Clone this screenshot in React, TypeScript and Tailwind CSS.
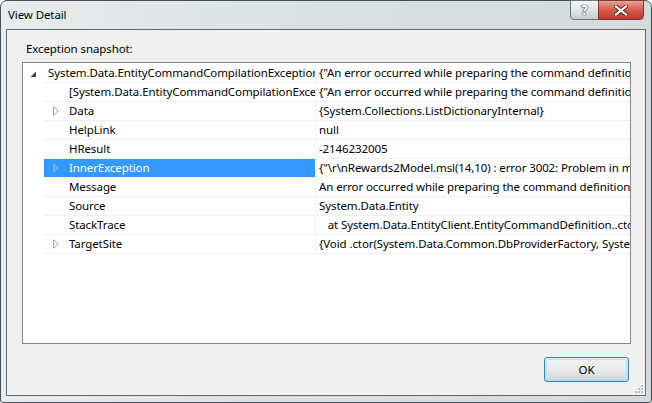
import React from "react";

const FONT = { fontFamily: '"Noto Sans", "Open Sans", Arial, sans-serif' };

type Row = {
  name: string;
  value: string;
  level: 0 | 1;
  expander: "expanded" | "collapsed" | "none";
  selected?: boolean;
};

const rows: Row[] = [
  {
    name: "System.Data.EntityCommandCompilationException",
    value:
      '{"An error occurred while preparing the command definition. See the inner exception for details."}',
    level: 0,
    expander: "expanded",
  },
  {
    name: "[System.Data.EntityCommandCompilationException]",
    value:
      '{"An error occurred while preparing the command definition. See the inner exception for details."}',
    level: 1,
    expander: "none",
  },
  { name: "Data", value: "{System.Collections.ListDictionaryInternal}", level: 1, expander: "collapsed" },
  { name: "HelpLink", value: "null", level: 1, expander: "none" },
  { name: "HResult", value: "-2146232005", level: 1, expander: "none" },
  {
    name: "InnerException",
    value: '{"\\r\\nRewards2Model.msl(14,10) : error 3002: Problem in mapping fragment starting at line 14"}',
    level: 1,
    expander: "collapsed",
    selected: true,
  },
  {
    name: "Message",
    value: "An error occurred while preparing the command definition. See the inner exception for details.",
    level: 1,
    expander: "none",
  },
  { name: "Source", value: "System.Data.Entity", level: 1, expander: "none" },
  {
    name: "StackTrace",
    value: "   at System.Data.EntityClient.EntityCommandDefinition..ctor(DbProviderFactory factory, DbCommandTree commandTree)",
    level: 1,
    expander: "none",
  },
  {
    name: "TargetSite",
    value: "{Void .ctor(System.Data.Common.DbProviderFactory, System.Data.Common.CommandTrees.DbCommandTree)}",
    level: 1,
    expander: "collapsed",
  },
];

function ExpandedIcon() {
  return (
    <svg width="7" height="7" viewBox="0 0 7 7" className="block">
      <polygon points="6,0.5 6,6 0.5,6" fill="#404040" />
    </svg>
  );
}

function CollapsedIcon({ selected }: { selected?: boolean }) {
  return (
    <svg width="6" height="10" viewBox="0 0 6 10" className="block">
      <polygon
        points="0.5,0.5 5,5 0.5,9.5"
        fill={selected ? "#5fa9f7" : "none"}
        stroke={selected ? "#6fb2f8" : "#a6a6a6"}
        strokeWidth="1"
      />
    </svg>
  );
}

function TreeRow({ row }: { row: Row }) {
  return (
    <div className="flex h-[19px] w-full shrink-0">
      <div className="flex h-[19px] w-[21px] shrink-0 items-center justify-end pr-[7px] pt-[2px]">
        {row.expander === "expanded" && row.level === 0 ? <ExpandedIcon /> : null}
      </div>
      <div className="flex min-w-0 flex-1 border-b border-[#f0f0f0]">
        <div
          className={`relative flex h-[18px] w-[271px] shrink-0 items-center overflow-hidden whitespace-nowrap ${
            row.selected ? "bg-[#3399ff] text-white" : "text-black"
          }`}
        >
          {row.level === 1 && (
            <div className="flex w-[25px] shrink-0 items-center justify-start pl-[9px]">
              {row.expander === "collapsed" ? <CollapsedIcon selected={row.selected} /> : null}
            </div>
          )}
          <span className={row.level === 0 ? "pl-[4px]" : ""}>{row.name}</span>
        </div>
        <div className="h-[18px] w-px shrink-0 bg-[#f0f0f0]" />
        <div className="flex h-[18px] min-w-0 flex-1 items-center overflow-hidden whitespace-pre pl-[3px] text-black">
          {row.value}
        </div>
      </div>
    </div>
  );
}

export default function App() {
  return (
    <div
      className="h-[403px] w-[652px] bg-white text-[11.5px] leading-[18px] tracking-[-0.1px]"
      style={FONT}
    >
      <div className="flex h-full w-full flex-col rounded-t-[7px] rounded-b-[3px] border border-[#4a4f55] bg-gradient-to-r from-[#e8ecee] via-[#d8e0e3] to-[#d3dbde] px-[5px] pb-[6px]">
        {/* Title bar */}
        <div className="flex h-[28px] shrink-0 items-start justify-between">
          <div className="pl-[2px] pt-[6px] leading-[16px] text-black">View Detail</div>
          <div className="-mt-px mr-[2px] flex">
            <div className="flex h-[20px] w-[29px] items-center justify-center rounded-bl-[4px] border border-[#6d7278] bg-gradient-to-b from-[#f4f6f7] via-[#dfe4e6] to-[#c6ced2]">
              <span className="text-[14px] font-bold leading-[16px] text-[#ffffff] [text-shadow:0_0_1px_#3a3f44,0_0_1px_#3a3f44,0_0_1px_#3a3f44]">
                ?
              </span>
            </div>
            <div className="-ml-px flex h-[20px] w-[46px] items-center justify-center rounded-br-[4px] border border-[#7a3b36] bg-gradient-to-b from-[#e8a397] via-[#d9574a] to-[#c0392e]">
              <svg width="14" height="11" viewBox="0 0 14 11">
                <path d="M2 1.5 L12 9.5 M12 1.5 L2 9.5" stroke="#4b2520" strokeWidth="4" strokeLinecap="square" />
                <path d="M2 1.5 L12 9.5 M12 1.5 L2 9.5" stroke="#ffffff" strokeWidth="2.2" strokeLinecap="square" />
              </svg>
            </div>
          </div>
        </div>

        {/* Client area */}
        <div className="relative flex min-h-0 flex-1 flex-col border border-[#646a70] bg-[#f0f0f0] pl-[15px] pr-[14px] pt-[11px]">
          <div className="h-[16px] pl-[4px] leading-[16px] text-black">Exception snapshot:</div>
          <div className="mt-[5px] flex h-[282px] flex-col overflow-hidden border border-[#828790] bg-white pt-px">
            {rows.map((r, i) => (
              <TreeRow key={i} row={r} />
            ))}
          </div>
          <div className="mt-[13px] flex justify-end pr-[2px]">
            <div className="flex h-[25px] w-[85px] items-center justify-center rounded-[3px] border border-[#3c7fb1] bg-gradient-to-b from-[#eaf6fd] via-[#d9f0fc] to-[#a7d9f5] p-px">
              <div className="flex h-full w-full items-center justify-center rounded-[2px] border border-[#b6e3f9] bg-gradient-to-b from-[#f2f2f2] via-[#ebebeb] to-[#d6d6d6] text-black">
                OK
              </div>
            </div>
          </div>
          <svg className="absolute bottom-[2px] right-[2px]" width="8" height="8" viewBox="0 0 8 8">
            {[
              [6, 0],
              [6, 3],
              [3, 3],
              [6, 6],
              [3, 6],
              [0, 6],
            ].map(([x, y], i) => (
              <rect key={i} x={x} y={y} width="2" height="2" fill="#b8bcbf" />
            ))}
          </svg>
        </div>
      </div>
    </div>
  );
}
